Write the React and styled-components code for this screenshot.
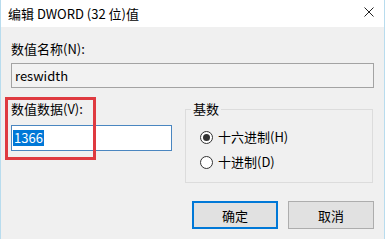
import { createGlobalStyle } from "styled-components";
import styled from "styled-components";

const GlobalStyle = createGlobalStyle`
  html, body {
    margin: 0;
    padding: 0;
    background: #f0f0f0;
  }
  body {
    font-family: "Noto Sans CJK SC", "Noto Sans", sans-serif;
    font-size: 12.5px;
    color: #000;
  }
`;

const App = () => {
  return (
    <>
      <GlobalStyle />
      <Window>
        <TitleBar>
          <Title>编辑 DWORD (32 位)值</Title>
          <CloseButton>
            <svg width="10" height="10" viewBox="0 0 10 10">
              <path d="M0.5 0.5 L9.5 9.5 M9.5 0.5 L0.5 9.5" stroke="#222" strokeWidth="1" fill="none" />
            </svg>
          </CloseButton>
        </TitleBar>

        <Body>
          <Label>数值名称(N):</Label>
          <NameField>reswidth</NameField>

          <Middle>
            <DataColumn>
              <Label>数值数据(V):</Label>
              <DataField>
                <Selected>1366</Selected>
              </DataField>
              <RedMark />
            </DataColumn>

            <BaseGroup>
              <Legend>基数</Legend>
              <RadioList>
                <RadioRow>
                  <RadioCircle checked />
                  <span>十六进制(H)</span>
                </RadioRow>
                <RadioRow>
                  <RadioCircle />
                  <span>十进制(D)</span>
                </RadioRow>
              </RadioList>
            </BaseGroup>
          </Middle>

          <Buttons>
            <Button primary>确定</Button>
            <Button>取消</Button>
          </Buttons>
        </Body>
      </Window>
    </>
  );
};

export default App;

const Window = styled.div`
  width: 385px;
  height: 239px;
  box-sizing: border-box;
  border-left: 1px solid #b8dcee;
  border-right: 1px solid #b8dcee;
  background: #f0f0f0;
  overflow: hidden;
`;
const TitleBar = styled.div`
  height: 27px;
  background: #fff;
  display: flex;
  align-items: center;
  justify-content: space-between;
  padding: 0 10px 0 7px;
`;
const Title = styled.div`
  font-size: 13px;
  line-height: 16px;
  color: #000;
`;
const CloseButton = styled.div`
  display: flex;
  align-items: center;
  margin-top: -3px;
`;
const Body = styled.div`
  padding: 14px 10px 0 10px;
  display: flex;
  flex-direction: column;
`;
const Label = styled.div`
  line-height: 16px;
  height: 16px;
  font-size: 13px;
`;
const NameField = styled.div`
  margin-top: 6px;
  height: 25px;
  box-sizing: border-box;
  border: 1px solid #a3a3a3;
  background: #f2f2f2;
  padding: 0 3px;
  line-height: 23px;
  font-size: 13px;
`;
const Middle = styled.div`
  margin-top: 13px;
  display: grid;
  grid-template-columns: 161px 188px;
  column-gap: 13px;
  align-items: start;
`;
const DataColumn = styled.div`
  position: relative;
  display: flex;
  flex-direction: column;
`;
const DataField = styled.div`
  margin-top: 8px;
  height: 26px;
  box-sizing: border-box;
  border: 1px solid #4a86c0;
  background: #fff;
  padding: 2px 1px;
  display: flex;
  align-items: center;
  font-size: 13px;
`;
const Selected = styled.span`
  background: #0078d7;
  color: #fff;
  line-height: 16px;
  padding: 0 1px;
`;
const RedMark = styled.div`
  position: absolute;
  left: -6px;
  top: -4px;
  width: 91px;
  height: 63px;
  box-sizing: border-box;
  border: 3px solid #df3a40;
  pointer-events: none;
`;
const BaseGroup = styled.fieldset`
  margin: 0;
  padding: 0;
  border: 1px solid #dcdcdc;
  height: 82px;
  box-sizing: border-box;
  min-width: 0;
`;
const Legend = styled.legend`
  margin-left: 5px;
  padding: 0 2px;
  line-height: 16px;
  font-size: 13px;
`;
const RadioList = styled.div`
  display: flex;
  flex-direction: column;
  gap: 9px;
  padding: 12px 0 0 14px;
`;
const RadioRow = styled.div`
  display: flex;
  align-items: center;
  gap: 5px;
  line-height: 16px;
  font-size: 13px;
`;
const RadioCircle = styled.span`
  width: 13px;
  height: 13px;
  box-sizing: border-box;
  border-radius: 50%;
  border: 1px solid #333;
  background: #fff;
  display: flex;
  align-items: center;
  justify-content: center;
  &::after {
    content: "";
    width: 7px;
    height: 7px;
    border-radius: 50%;
    background: ${(p) => (p.checked ? "#333" : "transparent")};
  }
`;
const Buttons = styled.div`
  margin-top: 18px;
  display: flex;
  justify-content: flex-end;
  gap: 10px;
`;
const Button = styled.div`
  width: 86px;
  height: 28px;
  box-sizing: border-box;
  background: #e1e1e1;
  border: ${(p) => (p.primary ? "2px solid #0078d7" : "1px solid #adadad")};
  display: flex;
  align-items: center;
  justify-content: center;
  color: #000;
  font-size: 13px;
`;
